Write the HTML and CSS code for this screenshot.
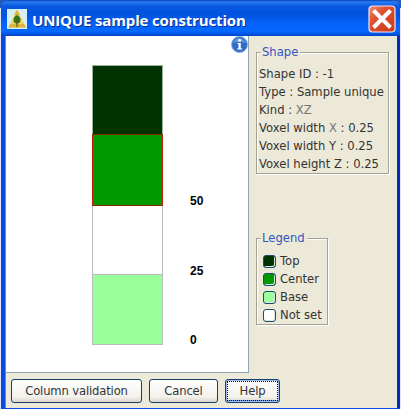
FILE: index.html
```
<!DOCTYPE html>
<html lang="en">
<head>
<meta charset="utf-8">
<title>UNIQUE sample construction</title>
<link rel="stylesheet" href="styles.css">
</head>
<body>
<div class="window">
  <header class="titlebar">
    <svg class="app-icon" width="20" height="20" viewBox="0 0 20 20">
      <rect width="20" height="20" fill="#d9eef0"/>
      <path d="M10 .5 19 18.5H1.500Z" fill="#edcf62"/>
      <path d="M10 1 13 6H7ZM3 15H17L19 18.500H1.500Z" fill="#d9b63e"/>
      <path d="M10 6C12.500 7 13.500 9 13.500 11C13.500 13.500 12 14.500 10 14.500C8 14.500 6.500 13.500 6.500 11C6.500 8.500 8 7 10 6Z" fill="#327619"/>
      <path d="M10 10V18" stroke="#6b4d16" stroke-width="1.200"/>
    </svg>
    <h1 class="title">UNIQUE sample construction</h1>
    <svg class="close" width="28" height="28" viewBox="0 0 28 28">
      <defs><linearGradient id="red" x1="0" y1="0" x2="1" y2="1"><stop offset="0" stop-color="#ee9279"/><stop offset=".35" stop-color="#e1512f"/><stop offset="1" stop-color="#c9381a"/></linearGradient></defs>
      <rect x="1" y="1" width="26" height="26" rx="3.500" fill="url(#red)" stroke="#f5e6f0" stroke-width="1.200"/>
      <path d="M5.500 5.500 22.500 22.500M22.500 5.500 5.500 22.500" stroke="#fff" stroke-width="4"/>
    </svg>
  </header>
  <main class="content">
    <section class="canvas">
      <svg class="info" width="17" height="17" viewBox="0 0 17 17">
        <circle cx="8.500" cy="8.500" r="8" fill="#2f6cc9" stroke="#8fb3e4"/>
        <path d="M2 7A6.800 6.800 0 0 1 15 7Q8 5 2 7Z" fill="#5e94df"/>
        <circle cx="8.600" cy="4.300" r="1.500" fill="#fff"/>
        <path d="M6.500 7H9.800V12.300H11V13.500H6.300V12.300H7.500V8.200H6.500Z" fill="#fff"/>
      </svg>
      <div class="column">
        <div class="voxel top"></div>
        <div class="voxel center"></div>
        <div class="voxel unset"></div>
        <div class="voxel base"></div>
      </div>
      <div class="scale"><span>50</span><span>25</span><span>0</span></div>
    </section>
    <aside class="side">
      <section class="group shape">
        <h2 class="caption">Shape</h2>
        <p>Shape ID : -1</p>
        <p>Type : Sample unique</p>
        <p>Kind : <i>XZ</i></p>
        <p>Voxel width <i>X</i> : 0.25</p>
        <p>Voxel width Y : 0.25</p>
        <p>Voxel height Z : 0.25</p>
      </section>
      <section class="group legend">
        <h2 class="caption">Legend</h2>
        <p><b class="swatch top"></b>Top</p>
        <p><b class="swatch center"></b>Center</p>
        <p><b class="swatch base"></b>Base</p>
        <p><b class="swatch unset"></b>Not set</p>
      </section>
    </aside>
  </main>
  <footer class="actions">
    <button class="btn validate">Column validation</button>
    <button class="btn cancel">Cancel</button>
    <button class="btn help"><span>Help</span></button>
  </footer>
</div>
</body>
</html>
```
FILE: styles.css
```
* { box-sizing: border-box; }
body {
  margin: 0;
  width: 401px;
  height: 409px;
  overflow: hidden;
  background: linear-gradient(#2858b8 0 8px, #dfe6f8 8px);
  font: 11.600px/18px "DejaVu Sans", sans-serif;
  color: #333;
}
.window {
  margin-left: 1px;
  width: 399px;
  height: 409px;
  display: flex;
  flex-direction: column;
  border: solid #0a4ae0;
  border-width: 0 3px 1px 4px;
  border-right-color: #0030b8;
  border-radius: 7px 7px 0 0;
  background: #ece9d8;
  box-shadow: inset 1px 0 #4c8cf4;
}
.titlebar {
  height: 36px;
  flex: none;
  margin: 0 -3px 0 -4px;
  padding: 5px 4px 0 6px;
  display: flex;
  align-items: flex-start;
  border-radius: 7px 7px 0 0;
  background: linear-gradient(#0842b8 0, #2a7df2 2px, #0858e2 6px, #0053de 14px, #0462fa 24px, #0469ff 31px, #0456e4 34px, #0340c0 36px);
}
.app-icon { margin-top: 4px; }
.title {
  margin: 4px 0 0 5px;
  flex: 1;
  font: bold 15px/22px "Open Sans", "Noto Sans", sans-serif;
  letter-spacing: -.150px;
  white-space: nowrap;
  color: #fff;
  text-shadow: 1px 1px #0b2f92;
}
.content { display: flex; height: 337px; flex: none; }
.canvas {
  width: 243px;
  margin-left: 1px;
  position: relative;
  display: flex;
  background: #fff;
  border-right: 1px solid #91a5b4;
  border-bottom: 1px solid #91a5b4;
}
.info { position: absolute; right: 0; top: 0; }
.column { width: 71px; margin: 29px 0 0 86px; }
.voxel { border: 1px solid #bbb; }
.voxel.top { height: 69px; border-color: #9cb39c; border-bottom: 0; }
.voxel.center { height: 72px; border-color: #8a2500 #c01c10; }
.voxel.unset { height: 68px; border-top: 0; border-bottom: 0; }
.voxel.base { height: 71px; }
.top { background: #003300; }
.center { background: #009900; }
.base { background: #99ff99; }
.unset { background: #fff; }
.scale {
  margin: 156px 0 0 27px;
  display: flex;
  flex-direction: column;
  font: bold 12px/18px "Liberation Sans", sans-serif;
  color: #000;
}
.scale span { height: 69.500px; flex: none; }
.scale span:last-child { height: 18px; }
.side { padding: 16px 0 0 7px; }
.group { border: 1px solid #a3a294; box-shadow: 1px 1px #fff, inset 1px 1px #fff; padding: 0 3px; }
.caption {
  width: max-content;
  margin: -9px 0 0 2px;
  padding: 0 2px 0 1px;
  background: #ece9d8;
  color: #3555c0;
  font-size: 11.600px;
  font-weight: normal;
  line-height: 17px;
}
.shape { width: 133px; height: 122px; padding-left: 2px; }
.group p { margin: 0; white-space: nowrap; }
.shape .caption + p { margin-top: 4px; }
.shape i { font-style: normal; color: #777; }
.legend { width: 72px; height: 87px; margin-top: 64px; padding-left: 6px; }
.legend .caption { margin-left: -2px; }
.legend .caption + p { margin-top: 5px; }
.legend p { display: flex; align-items: center; gap: 4px; }
.swatch { width: 13px; height: 13px; border: 1px solid #1c4a70; border-radius: 3px; box-shadow: inset -1px -1px #dce9de; }
.actions { display: flex; gap: 7px; padding: 6px 0 0 6px; }
.btn {
  height: 24px;
  padding: 0 0 1px;
  border: 1px solid #153f6c;
  border-radius: 3px;
  background: linear-gradient(#fff, #f3f2ec 75%, #dcd7cb);
  font: 11.600px/18px "DejaVu Sans", sans-serif;
  letter-spacing: -.150px;
  color: #333;
  white-space: nowrap;
}
.validate { width: 131px; }
.cancel { width: 69px; }
.help { width: 55px; padding: 0; box-shadow: inset 0 0 0 1px #9ebdec, inset 0 -2px #7fa4df; }
.help span { display: block; margin: 1px; height: 20px; line-height: 18px; border: 1px dotted #111; }
```
